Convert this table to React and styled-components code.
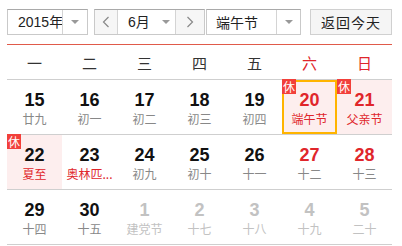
import React from "react";
import styled, { createGlobalStyle, css } from "styled-components";

const Global = createGlobalStyle`
  body {
    margin: 0;
    background: #fff;
    font-family: "Liberation Sans", "Noto Sans CJK SC", sans-serif;
  }
`;

const Wrap = styled.div`
  width: 385px;
  margin-left: 7px;
`;

// -------- toolbar
const Toolbar = styled.div`
  display: flex;
  align-items: flex-start;
  height: 35px;
  padding-top: 9px;
  box-sizing: border-box;
`;

const Select = styled.div`
  display: flex;
  height: 26px;
  box-sizing: border-box;
  border: 1px solid #c9c9c9;
  border-top-color: #a9a9a9;
  margin-right: ${(p) => p.gap || 0}px;
  background: #fff;
  font-size: 14px;
  color: #222;
  font-family: "Liberation Sans", "Noto Sans CJK SC", sans-serif;
`;

const Label = styled.div`
  width: ${(p) => p.w}px;
  padding-left: ${(p) => p.pad || 0}px;
  box-sizing: border-box;
  display: flex;
  align-items: center;
  line-height: 24px;
  white-space: nowrap;
  font-family: ${(p) =>
    p.cjk ? `"Noto Sans CJK SC", sans-serif` : `"Liberation Sans", "Noto Sans CJK SC", sans-serif`};
`;

const Drop = styled.div`
  width: ${(p) => p.w}px;
  border-left: ${(p) => (p.plain ? "none" : "1px solid #d4d4d4")};
  display: flex;
  align-items: center;
  justify-content: center;
  &::after {
    content: "";
    border-left: 4px solid transparent;
    border-right: 4px solid transparent;
    border-top: 4px solid #999;
  }
`;

const Step = styled.div`
  width: ${(p) => p.w}px;
  background: #f6f6f6;
  display: flex;
  align-items: center;
  justify-content: center;
  ${(p) =>
    p.left
      ? css`border-right: 1px solid #d4d4d4;`
      : css`border-left: 1px solid #d4d4d4;`}
`;

const TodayBtn = styled.div`
  width: 82px;
  height: 26px;
  box-sizing: border-box;
  border: 1px solid #d0d0d0;
  background: #f5f5f5;
  font-size: 14px;
  color: #222;
  display: flex;
  align-items: center;
  justify-content: center;
  letter-spacing: 1px;
  font-family: "Noto Sans CJK SC", sans-serif;
`;

// -------- calendar grid
const Grid = styled.div`
  display: grid;
  grid-template-columns: repeat(7, 55px);
  margin-top: 9px;
  border-top: 1px solid #e05a4a;
`;

const Week = styled.div`
  height: 34px;
  border-bottom: 1px solid #cfcfcf;
  display: flex;
  align-items: center;
  justify-content: center;
  font-size: 15px;
  color: ${(p) => (p.red ? "#e0262b" : "#333")};
  font-family: "Noto Sans CJK SC", sans-serif;
`;

const Cell = styled.div`
  position: relative;
  border-bottom: 1px solid #cfcfcf;
  text-align: center;
  padding-top: 10px;
  height: 44px;
  background: ${(p) => (p.rest ? "#fdeeee" : "transparent")};
  ${(p) =>
    p.today &&
    css`
      &::before {
        content: "";
        position: absolute;
        left: 0;
        top: 0;
        width: 55px;
        height: 54px;
        box-sizing: border-box;
        border: 2px solid #ffb400;
      }
    `}
`;

const Num = styled.div`
  font-size: 18px;
  font-weight: bold;
  line-height: 20px;
  color: ${(p) => (p.dim ? "#c2c2c2" : p.red ? "#e0262b" : "#111")};
`;

const Lunar = styled.div`
  font-size: 12px;
  line-height: 18px;
  white-space: nowrap;
  font-family: "Noto Sans CJK SC", sans-serif;
  color: ${(p) => (p.dim ? "#c2c2c2" : p.red ? "#e0262b" : "#888")};
`;

const Badge = styled.div`
  position: absolute;
  left: 0;
  top: -1px;
  width: 14px;
  height: 15px;
  background: #f2403a;
  color: #fff;
  font-size: 12px;
  line-height: 15px;
  text-align: center;
  font-family: "Noto Sans CJK SC", sans-serif;
  z-index: 1;
`;

const weeks = ["一", "二", "三", "四", "五", "六", "日"];

const days = [
  { n: 15, l: "廿九" },
  { n: 16, l: "初一" },
  { n: 17, l: "初二" },
  { n: 18, l: "初三" },
  { n: 19, l: "初四" },
  { n: 20, l: "端午节", red: true, lred: true, rest: true, badge: true, today: true },
  { n: 21, l: "父亲节", red: true, lred: true, rest: true, badge: true },
  { n: 22, l: "夏至", lred: true, rest: true, badge: true },
  { n: 23, l: "奥林匹...", lred: true },
  { n: 24, l: "初九" },
  { n: 25, l: "初十" },
  { n: 26, l: "十一" },
  { n: 27, l: "十二", red: true },
  { n: 28, l: "十三", red: true },
  { n: 29, l: "十四" },
  { n: 30, l: "十五" },
  { n: 1, l: "建党节", dim: true },
  { n: 2, l: "十七", dim: true },
  { n: 3, l: "十八", dim: true },
  { n: 4, l: "十九", dim: true },
  { n: 5, l: "二十", dim: true },
];

const Chevron = ({ dir }) => (
  <svg width="8" height="12" viewBox="0 0 8 12">
    <path
      d={dir === "left" ? "M6.5 1 L1.5 6 L6.5 11" : "M1.5 1 L6.5 6 L1.5 11"}
      fill="none"
      stroke="#888"
      strokeWidth="1.2"
    />
  </svg>
);

export default function App() {
  return (
    <>
      <Global />
      <Wrap>
        <Toolbar>
          <Select gap={6}>
            <Label w={54} pad={10}>2015年</Label>
            <Drop w={24} />
          </Select>
          <Select gap={1}>
            <Step w={22} left>
              <Chevron dir="left" />
            </Step>
            <Label w={38} pad={10}>6月</Label>
            <Drop w={19} plain />
            <Step w={28}>
              <Chevron dir="right" />
            </Step>
          </Select>
          <Select gap={9}>
            <Label w={69} pad={9} cjk>
              端午节
            </Label>
            <Drop w={23} />
          </Select>
          <TodayBtn>返回今天</TodayBtn>
        </Toolbar>

        <Grid>
          {weeks.map((w, i) => (
            <Week key={w} red={i >= 5}>
              {w}
            </Week>
          ))}
          {days.map((d, i) => (
            <Cell key={i} rest={d.rest} today={d.today}>
              {d.badge && <Badge>休</Badge>}
              <Num red={d.red} dim={d.dim}>{d.n}</Num>
              <Lunar red={d.lred} dim={d.dim}>{d.l}</Lunar>
            </Cell>
          ))}
        </Grid>
      </Wrap>
    </>
  );
}
